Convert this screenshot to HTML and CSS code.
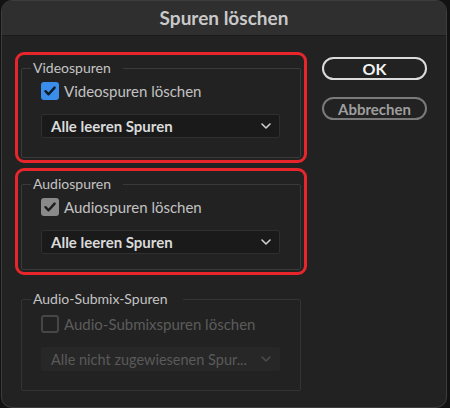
FILE: index.html
```html
<!DOCTYPE html>
<html lang="de">
<head>
<meta charset="utf-8">
<title>Spuren löschen</title>
<link rel="stylesheet" href="styles.css">
</head>
<body>
<div class="dialog">
  <div class="titlebar">Spuren löschen</div>
  <div class="content">
    <div class="groups">
      <div class="mark">
        <fieldset class="group">
          <legend>Videospuren</legend>
          <label class="check"><span class="box on"><svg viewBox="0 0 18 18"><path d="M4.5 9.2 L7.6 12.3 L13.6 5.6" /></svg></span>Videospuren löschen</label>
          <div class="select"><span class="value">Alle leeren Spuren</span><svg class="chev" viewBox="0 0 10 6"><path d="M1 1 L5 5 L9 1" /></svg></div>
        </fieldset>
      </div>
      <div class="mark tight">
        <fieldset class="group">
          <legend>Audiospuren</legend>
          <label class="check"><span class="box gray"><svg viewBox="0 0 18 18"><path d="M4.5 9.2 L7.6 12.3 L13.6 5.6" /></svg></span>Audiospuren löschen</label>
          <div class="select"><span class="value">Alle leeren Spuren</span><svg class="chev" viewBox="0 0 10 6"><path d="M1 1 L5 5 L9 1" /></svg></div>
        </fieldset>
      </div>
      <fieldset class="group plain disabled">
        <legend>Audio-Submix-Spuren</legend>
        <label class="check"><span class="box off"></span>Audio-Submixspuren löschen</label>
        <div class="select"><span class="value">Alle nicht zugewiesenen Spur...</span><svg class="chev" viewBox="0 0 10 6"><path d="M1 1 L5 5 L9 1" /></svg></div>
      </fieldset>
    </div>
    <div class="buttons">
      <button class="btn primary">OK</button>
      <button class="btn">Abbrechen</button>
    </div>
  </div>
</div>
</body>
</html>
```

FILE: styles.css
```css
* { box-sizing: border-box; }
html, body {
  margin: 0;
  padding: 0;
  background: #121212;
  width: 450px;
  height: 408px;
  overflow: hidden;
  font-family: Lato, "Open Sans", sans-serif;
}
.dialog {
  margin-left: 1px;
  width: 446px;
  height: 408px;
  background: #222222;
  border: 1px solid #3d3d3e;
  border-radius: 11px;
  overflow: hidden;
}
.titlebar {
  height: 35px;
  background: #2f2f30;
  border-bottom: 1px solid #1b1b1b;
  color: #c9c9c9;
  font-weight: 700;
  font-size: 19px;
  line-height: 34px;
  text-align: center;
}
.content {
  display: flex;
  gap: 15px;
  padding: 16px 0 0 13px;
}
.groups {
  width: 292px;
  display: flex;
  flex-direction: column;
  gap: 5px;
}
.mark {
  border: 3px solid #e6262b;
  border-radius: 9px;
  padding: 5px 3px 2px 3px;
}
.group {
  margin: 0;
  border: 1px solid #3a3a3a;
  border-radius: 2px;
  padding: 6px 19px 19px 19px;
  display: flex;
  flex-direction: column;
  gap: 14px;
}
.mark.tight .group { padding-bottom: 15px; }
.group.plain {
  margin: 11px 6px 0 6px;
  padding-top: 8px;
  border-color: #343434;
}
legend {
  margin-left: -10px;
  padding: 0 12px 0 2px;
  font-size: 14px;
  line-height: 16px;
  color: #c4c4c4;
}
.group.plain legend { padding-right: 16px; }
.check {
  display: flex;
  align-items: center;
  gap: 5px;
  height: 18px;
  font-size: 15px;
  color: #c2c2c2;
}
.box {
  width: 18px;
  height: 18px;
  border-radius: 3px;
  display: flex;
  align-items: center;
  justify-content: center;
  flex: none;
}
.box svg { width: 18px; height: 18px; }
.box svg path { fill: none; stroke-width: 2.4; stroke-linecap: round; stroke-linejoin: round; }
.box.on { background: #3a8ee9; }
.box.on svg path { stroke: #101820; }
.box.gray { background: #8a8a8a; }
.box.gray svg path { stroke: #1d1d1d; }
.box.off { border: 2px solid #464646; }
.select {
  width: 239px;
  height: 24px;
  background: #1a1a1a;
  border: 1px solid #2f2f2f;
  border-radius: 2px;
  display: flex;
  align-items: center;
  padding: 0 8px 0 9px;
  gap: 6px;
}
.value {
  flex: 1;
  min-width: 0;
  white-space: nowrap;
  font-size: 15px;
  font-weight: 700;
  color: #dadada;
}
.chev { width: 10px; height: 6px; flex: none; }
.chev path { fill: none; stroke: #cfcfcf; stroke-width: 1.6; stroke-linecap: round; stroke-linejoin: round; }
.disabled .check { color: #5c5c5c; }
.disabled .select { background: #272727; border-color: #272727; }
.disabled .value { color: #5a5a5a; font-weight: 400; font-size: 14.5px; }
.disabled .chev path { stroke: #4c4c4c; }
.buttons {
  display: flex;
  flex-direction: column;
  gap: 17px;
  padding-top: 5px;
}
.btn {
  width: 105px;
  height: 23px;
  border-radius: 12px;
  background: transparent;
  border: 2px solid #7a7a7a;
  color: #9e9e9e;
  font-family: Lato, "Open Sans", sans-serif;
  font-size: 15px;
  font-weight: 700;
  padding: 0;
  line-height: 18px;
}
.btn.primary {
  border-color: #dcdcdc;
  color: #f2f2f2;
  font-size: 16px;
}
```
